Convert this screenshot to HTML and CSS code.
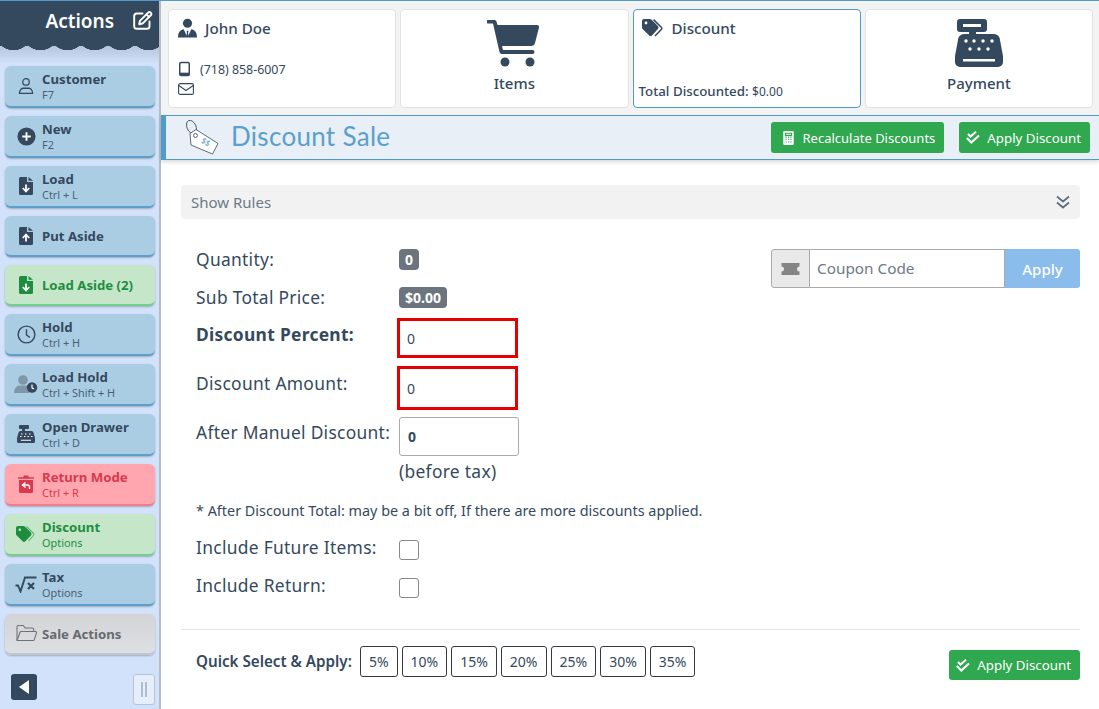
FILE: index.html
```html
<!DOCTYPE html>
<html lang="en">
<head>
    <meta charset="UTF-8">
    <title>Discount Sale</title>
    <link rel="stylesheet" href="styles.css">
</head>
<body>
<div class="app">
    <div class="sidebar">
        <div class="side-head">
            <span class="side-title">Actions</span>
            <svg class="side-edit" viewBox="0 0 24 24" fill="none" stroke="#fff" stroke-width="2.2" stroke-linejoin="round" stroke-linecap="round"><path d="M12 4H5.500A3 3 0 0 0 2.500 7v11.500a3 3 0 0 0 3 3H17a3 3 0 0 0 3-3V13"/><path d="M9 12.500 18.500 3a2 2 0 0 1 2.800 0l.2.200a2 2 0 0 1 0 2.800L12 15.500l-3.800.8z"/><path d="M16.500 5l3 3"/></svg>
        </div>
        <div class="scallops"></div>
        <div class="side-list">
            <div class="act">
                <span class="act-ico"><svg viewBox="0 0 20 20" width="18" height="20" fill="none" stroke="#34495e" stroke-width="1.400"><circle cx="10" cy="5.500" r="3.600"/><path d="M2.700 18.300c0-4 2.500-5.800 4.500-5.800h5.600c2 0 4.500 1.800 4.500 5.800z"/></svg></span>
                <span class="act-txt"><b>Customer</b><small>F7</small></span>
            </div>
            <div class="act">
                <span class="act-ico"><svg viewBox="0 0 20 20" width="19" height="19"><circle cx="10" cy="10" r="9.500" fill="#34495e"/><path d="M10 5.500v9M5.500 10h9" stroke="#fff" stroke-width="2"/></svg></span>
                <span class="act-txt"><b>New</b><small>F2</small></span>
            </div>
            <div class="act">
                <span class="act-ico"><svg viewBox="0 0 14 18" width="14" height="18"><path d="M1.500 0H8v5h6v11.500a1.500 1.500 0 0 1-1.500 1.500h-11A1.500 1.500 0 0 1 0 16.500v-15A1.500 1.500 0 0 1 1.500 0zM9.500 0 14 3.800H9.500z" fill="#34495e"/><path d="M7 7.500v6M3.800 11 7 14.500 10.200 11" stroke="#fff" stroke-width="1.800" fill="none"/></svg></span>
                <span class="act-txt"><b>Load</b><small>Ctrl + L</small></span>
            </div>
            <div class="act act-single">
                <span class="act-ico"><svg viewBox="0 0 14 18" width="14" height="18"><path d="M1.500 0H8v5h6v11.500a1.500 1.500 0 0 1-1.500 1.500h-11A1.500 1.500 0 0 1 0 16.500v-15A1.500 1.500 0 0 1 1.500 0zM9.500 0 14 3.800H9.500z" fill="#34495e"/><path d="M7 14.500v-6M3.800 11 7 7.500l3.200 3.500" stroke="#fff" stroke-width="1.800" fill="none"/></svg></span>
                <span class="act-txt"><b>Put Aside</b></span>
            </div>
            <div class="act act-single act-green">
                <span class="act-ico"><svg viewBox="0 0 14 18" width="14" height="18"><path d="M1.500 0H8v5h6v11.500a1.500 1.500 0 0 1-1.500 1.500h-11A1.500 1.500 0 0 1 0 16.500v-15A1.500 1.500 0 0 1 1.500 0zM9.500 0 14 3.800H9.500z" fill="#1e8e3e"/><path d="M7 7.500v6M3.800 11 7 14.500 10.200 11" stroke="#fff" stroke-width="1.800" fill="none"/></svg></span>
                <span class="act-txt"><b>Load Aside (2)</b></span>
            </div>
            <div class="act">
                <span class="act-ico"><svg viewBox="0 0 20 20" width="19" height="19" fill="none" stroke="#34495e" stroke-width="1.500"><circle cx="10" cy="10" r="8.800"/><path d="M10 4.500V10.500l3.500 2.500"/></svg></span>
                <span class="act-txt"><b>Hold</b><small>Ctrl + H</small></span>
            </div>
            <div class="act">
                <span class="act-ico"><svg viewBox="0 0 24 20" width="24" height="20"><circle cx="9" cy="6" r="4.800" fill="#7f97a8"/><path d="M0 19c0-5 3-7.500 6-7.500h6c1.500 0 2.500.5 3 1V19z" fill="#7f97a8"/><circle cx="18" cy="13.500" r="5.200" fill="#34495e"/><path d="M18 10.500v3.300l2 1.200" stroke="#fff" stroke-width="1.200" fill="none"/></svg></span>
                <span class="act-txt"><b>Load Hold</b><small>Ctrl + Shift + H</small></span>
            </div>
            <div class="act">
                <span class="act-ico"><svg viewBox="0 0 18 18" width="18" height="18"><path d="M3 0h8a1 1 0 0 1 1 1v2a1 1 0 0 1-1 1H8v2h6.500A2 2 0 0 1 16.500 7.500L18 13v3.500a1.500 1.500 0 0 1-1.500 1.500h-15A1.500 1.500 0 0 1 0 16.500V13l1.500-5.500A2 2 0 0 1 3.500 6H5V4H3a1 1 0 0 1-1-1V1a1 1 0 0 1 1-1z" fill="#34495e"/><path d="M4 9h1.500M8 9h1.500M12 9h1.500M3 11.500h1.500M7 11.500h1.500M10.500 11.500H12M14 11.500h1.500M4 15.300h10" stroke="#fff" stroke-width="1.100"/></svg></span>
                <span class="act-txt"><b>Open Drawer</b><small>Ctrl + D</small></span>
            </div>
            <div class="act act-red">
                <span class="act-ico"><svg viewBox="0 0 16 18" width="16" height="18"><path d="M0 2.200h5L6 .5h4l1 1.700h5v1.500H0zM1 5h14v11.500a1.500 1.500 0 0 1-1.500 1.500h-11A1.500 1.500 0 0 1 1 16.500z" fill="#d9394c"/><path d="M7.500 7.500 4.500 10l3 2.500M5 10h4.500a2 2 0 0 1 2 2v2" stroke="#fff" stroke-width="1.500" fill="none"/></svg></span>
                <span class="act-txt"><b>Return Mode</b><small>Ctrl + R</small></span>
            </div>
            <div class="act act-green">
                <span class="act-ico"><svg viewBox="0 0 20 17" width="20" height="17"><path d="M0 2a2 2 0 0 1 2-2h5.500a2 2 0 0 1 1.400.6l6 6a2 2 0 0 1 0 2.800l-5.600 5.900a2 2 0 0 1-2.800 0l-6-6A2 2 0 0 1 0 8z" fill="#1e8e3e"/><circle cx="3.800" cy="3.800" r="1.300" fill="#c5e6c9"/><path d="M10.500.5 17.500 7.500a1.500 1.500 0 0 1 0 2L12.500 15" stroke="#1e8e3e" stroke-width="1.100" fill="none" opacity=".6"/></svg></span>
                <span class="act-txt"><b>Discount</b><small>Options</small></span>
            </div>
            <div class="act">
                <span class="act-ico"><svg viewBox="0 0 22 17" width="22" height="17" fill="none" stroke="#34495e"><path d="M.5 9.500H3l2.500 6L10 1.500h11.500" stroke-width="1.900"/><path d="M13 7l6 6M19 7l-6 6" stroke-width="2.200"/></svg></span>
                <span class="act-txt"><b>Tax</b><small>Options</small></span>
            </div>
            <div class="act act-single act-grey">
                <span class="act-ico"><svg viewBox="0 0 21 17" width="21" height="17" fill="none" stroke="#6e7378" stroke-width="1.100"><path d="M1 15V2a1.500 1.500 0 0 1 1.500-1.500h4.700l2 2.500h7a1.500 1.500 0 0 1 1.500 1.500V6.500"/><path d="M1 15.500 4 7.300a1 1 0 0 1 1-.8h14.500a1 1 0 0 1 1 1.300l-2.300 7a1 1 0 0 1-1 .7z"/></svg></span>
                <span class="act-txt"><b>Sale Actions</b></span>
            </div>
        </div>
        <div class="side-foot">
            <span class="collapse"><svg viewBox="0 0 10 14" width="10" height="14"><path d="M10 0v14L0 7z" fill="#fff"/></svg></span>
            <span class="grip"></span>
        </div>
    </div>

    <div class="main">
        <div class="cards">
            <div class="card">
                <div class="card-head">
                    <svg viewBox="0 0 20 20" width="19" height="20"><circle cx="10" cy="5" r="4.800" fill="#34495e"/><path d="M0 20c0-6 2.500-8 6-8.800L10 20l4-8.800c3.500.8 6 2.800 6 8.800z" fill="#34495e"/><path d="M10 12.500 8.800 14l.7 1-.7 3.500L10 20l1.200-1.500-.7-3.500.7-1z" fill="#34495e"/></svg>
                    <span>John Doe</span>
                </div>
                <div class="card-line card-phone">
                    <svg viewBox="0 0 12 16" width="11" height="16"><rect x=".8" y=".8" width="10.400" height="14.400" rx="1.500" fill="none" stroke="#34495e" stroke-width="1.600"/><rect x="1" y="12" width="10" height="3" fill="#34495e"/></svg>
                    <span>(718) 858-6007</span>
                </div>
                <div class="card-line">
                    <svg viewBox="0 0 16 12" width="16" height="12" fill="none" stroke="#34495e" stroke-width="1.100"><rect x=".6" y=".6" width="14.800" height="10.800" rx="1.500"/><path d="M.8 2.500 8 7.500l7.200-5"/></svg>
                </div>
            </div>
            <div class="card card-big">
                <svg viewBox="0 0 54 48" width="54" height="48"><path d="M1 1h6.500a2 2 0 0 1 2 1.600L10.500 6H50a2 2 0 0 1 2 2.500l-4 15.500a4 4 0 0 1-3.800 3H15l1 4h29.500a1.500 1.500 0 0 1 0 4H15a2.500 2.500 0 0 1-2.500-2L6 4.500H1a1.700 1.700 0 0 1 0-3.500z" fill="#34495e"/><circle cx="18" cy="43" r="4.500" fill="#34495e"/><circle cx="43" cy="43" r="4.500" fill="#34495e"/></svg>
                <span>Items</span>
            </div>
            <div class="card card-active">
                <div class="card-head">
                    <svg viewBox="0 0 22 18" width="22" height="18"><path d="M0 2a2 2 0 0 1 2-2h6a2 2 0 0 1 1.400.6l6.500 6.500a2 2 0 0 1 0 2.800l-5.900 6.500a2 2 0 0 1-2.800 0L.6 9.900A2 2 0 0 1 0 8.500z" fill="#34495e"/><circle cx="4" cy="4" r="1.400" fill="#fff"/><path d="M11.500.6l7.800 7.600a1.600 1.600 0 0 1 0 2.300L13 17" stroke="#34495e" stroke-width="1.500" fill="none"/></svg>
                    <span>Discount</span>
                </div>
                <div class="card-total"><b>Total Discounted:</b> <small>$0.00</small></div>
            </div>
            <div class="card card-big">
                <svg viewBox="0 0 48 48" width="48" height="48"><path d="M5 0h24a3 3 0 0 1 3 3v7a3 3 0 0 1-3 3H21v2h18a6 6 0 0 1 6 6l3 16v6a5 5 0 0 1-5 5H5a5 5 0 0 1-5-5v-6l3-16a6 6 0 0 1 6-6h5v-2H5a3 3 0 0 1-3-3V3a3 3 0 0 1 3-3z" fill="#34495e"/><path d="M8 5h18v3H8zM8 40h32v2.500H8z" fill="#fff"/><g fill="#fff"><circle cx="11" cy="22" r="1.700"/><circle cx="19" cy="22" r="1.700"/><circle cx="28" cy="22" r="1.700"/><circle cx="37" cy="22" r="1.700"/><circle cx="15" cy="30" r="1.700"/><circle cx="24" cy="30" r="1.700"/><circle cx="33" cy="30" r="1.700"/></g></svg>
                <span>Payment</span>
            </div>
        </div>

        <div class="title-bar">
            <svg class="title-ico" viewBox="0 0 34 36" width="34" height="36" fill="none" stroke="#34495e" stroke-width=".8"><ellipse cx="6.500" cy="7" rx="4.500" ry="7" transform="rotate(-25 6.500 7)"/><path d="M5 13.500 11 9.500l22 14-5.500 10.500L6 25z" fill="#fff"/><circle cx="10.500" cy="15.500" r="2"/><text x="16" y="24" font-size="8" fill="#5b9fcb" stroke="none" transform="rotate(30 19 22)">$$</text></svg>
            <h1>Discount Sale</h1>
            <div class="title-btns">
                <button class="btn-green btn-recalc">
                    <svg viewBox="0 0 12 16" width="11" height="14"><rect width="12" height="16" rx="1.500" fill="#fff"/><path d="M2.500 2.500h7v2.500h-7zM2.500 7h1.500M5.300 7h1.500M8 7h1.500M2.500 9.500h1.500M5.300 9.500h1.500M8 9.500h1.500M2.500 12.500h1.500M5.300 12.500h1.500M8 12.500h1.500" stroke="#2fa84f" stroke-width="1.200" fill="none"/></svg>
                    Recalculate Discounts
                </button>
                <button class="btn-green">
                    <svg viewBox="0 0 14 13" width="14" height="13" fill="none" stroke="#fff" stroke-width="2.100"><path d="M2 3 4.500 5.500 10 .8"/><path d="M.8 7l4.500 4.500L13 4.500"/></svg>
                    Apply Discount
                </button>
            </div>
        </div>

        <div class="content">
            <div class="rules-bar">
                <span>Show Rules</span>
                <svg viewBox="0 0 14 14" width="14" height="14" fill="none" stroke="#5f6f7d" stroke-width="1.800"><path d="M1 1.500 7 6.500l6-5M1 7.500l6 5 6-5"/></svg>
            </div>

            <div class="form-area">
                <div class="form-left">
                    <div class="row row-qty"><label>Quantity:</label><span class="badge">0</span></div>
                    <div class="row row-sub"><label>Sub Total Price:</label><span class="badge">$0.00</span></div>
                    <div class="row row-pct"><label class="strong">Discount Percent:</label><span class="field field-red field-pct">0</span></div>
                    <div class="row row-amt"><label>Discount Amount:</label><span class="field field-red field-amt">0</span></div>
                    <div class="row row-after"><label>After Manuel Discount:</label><span class="field field-bold">0</span></div>
                    <div class="row-tax">(before tax)</div>
                    <p class="note">* After Discount Total: may be a bit off, If there are more discounts applied.</p>
                    <div class="row row-inc"><label>Include Future Items:</label><span class="check"></span></div>
                    <div class="row row-inc"><label>Include Return:</label><span class="check"></span></div>
                </div>
                <div class="coupon">
                    <span class="coupon-ico"><svg viewBox="0 0 18 12" width="19" height="12"><path d="M0 0h18v3.500a2.500 2.500 0 0 0 0 5V12H0V8.500a2.500 2.500 0 0 0 0-5z" fill="#858585"/></svg></span>
                    <span class="coupon-input">Coupon Code</span>
                    <span class="coupon-btn">Apply</span>
                </div>
            </div>

            <div class="quick">
                <b>Quick Select &amp; Apply:</b>
                <div class="quick-btns">
                    <span>5%</span><span>10%</span><span>15%</span><span>20%</span><span>25%</span><span>30%</span><span>35%</span>
                </div>
                <button class="btn-green btn-bottom">
                    <svg viewBox="0 0 14 13" width="14" height="13" fill="none" stroke="#fff" stroke-width="2.100"><path d="M2 3 4.500 5.500 10 .8"/><path d="M.8 7l4.500 4.500L13 4.500"/></svg>
                    Apply Discount
                </button>
            </div>
        </div>
    </div>
</div>
</body>
</html>
```

FILE: styles.css
```css
* {
    box-sizing: border-box;
}

html, body {
    margin: 0;
    height: 709px;
    overflow: hidden;
}

body {
    font-family: "Noto Sans", "Open Sans", sans-serif;
    color: #34495e;
    background: #fff;
}

.app {
    display: flex;
    height: 709px;
    border-top: 1px solid #4f9bc9;
}

/* sidebar */
.sidebar {
    flex: 0 0 161px;
    display: flex;
    flex-direction: column;
    background: #d3e2fb;
    border-right: 2px solid #b4bcc8;
}

.side-head {
    height: 45px;
    display: flex;
    align-items: center;
    justify-content: flex-end;
    gap: 18px;
    padding: 0 6px 6px 0;
    background: #34495e;
    color: #fff;
}

.side-title {
    font-size: 19px;
    font-weight: 600;
}

.side-edit {
    width: 21px;
    height: 21px;
}

.scallops {
    height: 18px;
    background:
        radial-gradient(circle at 13.500px -14px, #34495e 18px, transparent 18.500px) 0 0 / 27px 5px repeat-x,
        linear-gradient(#b5c5dc, #d3e2fb);
}

.side-list {
    display: flex;
    flex-direction: column;
    gap: 8px;
    padding: 2px 4px 0 5px;
}

.act {
    height: 42px;
    display: flex;
    align-items: center;
    background: #abcde3;
    border-radius: 6px;
    border-bottom: 2px solid #5b9fcb;
    box-shadow: 0 1px 2px rgba(0, 0, 0, .25);
    color: #34495e;
}

.act-single {
    height: 41px;
}

.act-ico {
    flex: 0 0 37px;
    display: flex;
    justify-content: center;
    padding-left: 5px;
}

.act-txt {
    display: flex;
    flex-direction: column;
    padding-top: 2px;
    line-height: 15px;
    white-space: nowrap;
}

.act-txt b {
    font-size: 13.200px;
    font-weight: 700;
}

.act-txt small {
    font-size: 10.900px;
    line-height: 16px;
    color: #4a5f74;
}

.act-green {
    background: #c5e6c9;
    border-bottom-color: #74cf8a;
}

.act-green .act-txt b,
.act-green .act-txt small {
    color: #1e8e3e;
}

.act-red {
    background: #ffa6ae;
    border-bottom-color: #ee7f8a;
}

.act-red .act-txt b,
.act-red .act-txt small {
    color: #d9394c;
}

.act-grey {
    background: linear-gradient(#d4d4d6, #dcdfe3);
    border-bottom-color: #c3c7cc;
}

.act-grey .act-txt b {
    color: #666b70;
}

.side-foot {
    display: flex;
    justify-content: space-between;
    align-items: flex-start;
    padding: 0 4px 0 11px;
    margin-top: 19px;
}

.collapse {
    width: 26px;
    height: 26px;
    display: flex;
    align-items: center;
    justify-content: center;
    background: #34495e;
    border-radius: 3px;
}

.grip {
    width: 22px;
    height: 31px;
    background: linear-gradient(90deg, #aebccd 2px, transparent 2px, transparent 4px, #aebccd 4px) center / 6px 15px no-repeat, #e6eefb;
    border: 1px solid #b9c4d2;
    border-radius: 3px;
}

/* top cards */
.main {
    flex: 1;
    min-width: 0;
    display: flex;
    flex-direction: column;
}

.cards {
    height: 114px;
    display: grid;
    grid-template-columns: repeat(4, 1fr);
    gap: 4px;
    padding: 8px 6px 7px 7px;
    background: #f3f3f3;
}

.card {
    min-width: 0;
    background: #fff;
    border: 1px solid #e2e2e2;
    border-radius: 4px;
    padding: 6px 9px;
    font-size: 14px;
    position: relative;
}

.card-active {
    border-color: #4f9bc9;
    padding-left: 5px;
}

.card-head {
    display: flex;
    align-items: center;
    gap: 8px;
    height: 24px;
    font-weight: 500;
    font-size: 15.200px;
}

.card-active .card-head {
    padding-left: 3px;
}

.card-line {
    display: flex;
    align-items: center;
    gap: 10px;
    font-size: 12.400px;
    height: 20px;
}

.card-phone {
    margin-top: 19px;
    padding-left: 1px;
}

.card-big {
    display: flex;
    flex-direction: column;
    align-items: center;
    padding: 9px 0 0;
    gap: 6px;
    font-size: 15px;
    font-weight: 500;
}

.card-total {
    position: absolute;
    left: 5px;
    bottom: 7px;
    font-size: 13.300px;
}

.card-total b {
    font-weight: 500;
}

.card-total small {
    font-size: 12px;
}

/* title bar */
.title-bar {
    height: 45px;
    display: flex;
    align-items: center;
    background: #e8eff6;
    border-top: 1px solid #4f9bc9;
    border-bottom: 1px solid #4f9bc9;
    border-left: 5px solid #4f9bc9;
    box-shadow: 0 2px 4px rgba(0, 0, 0, .15);
    padding: 0 9px 0 19px;
}

.title-ico {
    flex: none;
    margin-right: 12px;
}

.title-bar h1 {
    margin: 0 0 4px;
    font-family: Lato, "Noto Sans", sans-serif;
    font-size: 26px;
    font-weight: 400;
    color: #5b9fcb;
    letter-spacing: .3px;
}

.title-btns {
    margin-left: auto;
    display: flex;
    gap: 15px;
}

.btn-green {
    height: 31px;
    display: inline-flex;
    align-items: center;
    gap: 7px;
    padding: 0 9px 0 7px;
    background: #2fa84f;
    color: #fff;
    border: 0;
    border-radius: 3px;
    font-family: inherit;
    font-size: 13.300px;
}

.btn-recalc {
    padding: 0 9px 0 12px;
    gap: 9px;
    font-size: 13px;
}

/* content */
.content {
    flex: 1;
    padding: 25px 19px 0 20px;
}

.rules-bar {
    height: 34px;
    display: flex;
    align-items: center;
    justify-content: space-between;
    padding: 0 10px;
    background: #f2f2f2;
    border-radius: 4px;
    font-size: 15px;
    color: #6c7a86;
}

.form-area {
    display: flex;
    justify-content: space-between;
    align-items: flex-start;
    height: 411px;
    padding: 0 0 0 15px;
    border-bottom: 1px solid #e6e6e6;
}

.form-left {
    padding-top: 28px;
    font-size: 17.400px;
    letter-spacing: .3px;
}

.row {
    display: flex;
    align-items: flex-start;
}

.row label {
    flex: 0 0 203px;
    white-space: nowrap;
}

.strong {
    font-weight: 700;
}

.row-qty {
    height: 38px;
    line-height: 24px;
}

.row-sub {
    height: 34px;
    line-height: 24px;
}

.row-pct {
    height: 48px;
    line-height: 24px;
}

.row-pct label {
    padding-top: 3px;
}

.row-amt {
    height: 50px;
    line-height: 24px;
}

.row-amt label {
    padding-top: 4px;
}

.row-after {
    height: 40px;
    line-height: 24px;
}

.row-after label {
    padding-top: 3px;
}

.badge {
    margin-top: 2px;
    height: 21px;
    padding: 0 6px;
    background: #6c757d;
    border-radius: 4px;
    color: #fff;
    font-size: 14px;
    font-weight: 700;
    letter-spacing: 0;
    line-height: 21px;
}

.field {
    width: 120px;
    height: 39px;
    display: flex;
    align-items: center;
    padding-left: 8px;
    font-size: 14px;
    letter-spacing: 0;
    border: 1px solid #aaa;
    border-radius: 3px;
}

.field-red {
    width: 121px;
    border: 3px solid #e60000;
    border-radius: 0;
    margin: -1px 0 0 -2px;
    padding: 1px 0 0 7px;
}

.field-pct {
    height: 40px;
}

.field-amt {
    height: 44px;
}

.field-bold {
    font-weight: 700;
}

.row-tax {
    margin: 2px 0 0 203px;
    line-height: 24px;
}

.note {
    margin: 16px 0 0;
    font-size: 14.400px;
    letter-spacing: 0;
    line-height: 24px;
}

.row-inc {
    height: 38px;
    align-items: center;
}

.row-inc label {
    margin-bottom: 2px;
}

.note + .row-inc {
    margin-top: 6px;
}

.check {
    width: 20px;
    height: 20px;
    margin-top: 4px;
    border: 1px solid #888;
    border-radius: 3px;
    background: #fff;
}

.coupon {
    margin-top: 30px;
    width: 309px;
    height: 39px;
    display: flex;
    border-radius: 3px;
    font-size: 15.300px;
}

.coupon-ico {
    flex: 0 0 39px;
    display: flex;
    align-items: center;
    justify-content: center;
    background: #e9e9e9;
    border: 1px solid #aaa;
    border-radius: 3px 0 0 3px;
}

.coupon-input {
    flex: 1;
    display: flex;
    align-items: center;
    padding: 0 0 2px 7px;
    border: 1px solid #aaa;
    border-left: 0;
    color: #6c7a86;
}

.coupon-btn {
    flex: 0 0 75px;
    display: flex;
    align-items: center;
    justify-content: center;
    background: #8abcec;
    border-radius: 0 3px 3px 0;
    color: #fff;
    font-size: 15px;
    font-weight: 500;
}

.quick {
    display: flex;
    align-items: flex-start;
    padding: 16px 0 0 15px;
}

.quick b {
    font-size: 15.200px;
    font-weight: 600;
    line-height: 30px;
    margin-right: 8px;
}

.quick-btns {
    display: flex;
    gap: 4px;
}

.quick-btns span {
    height: 31px;
    display: flex;
    align-items: center;
    padding: 0 8px;
    border: 1px solid #343a40;
    border-radius: 3px;
    font-size: 14px;
}

.btn-bottom {
    margin-left: auto;
    height: 30px;
    margin-top: 4px;
}
```
